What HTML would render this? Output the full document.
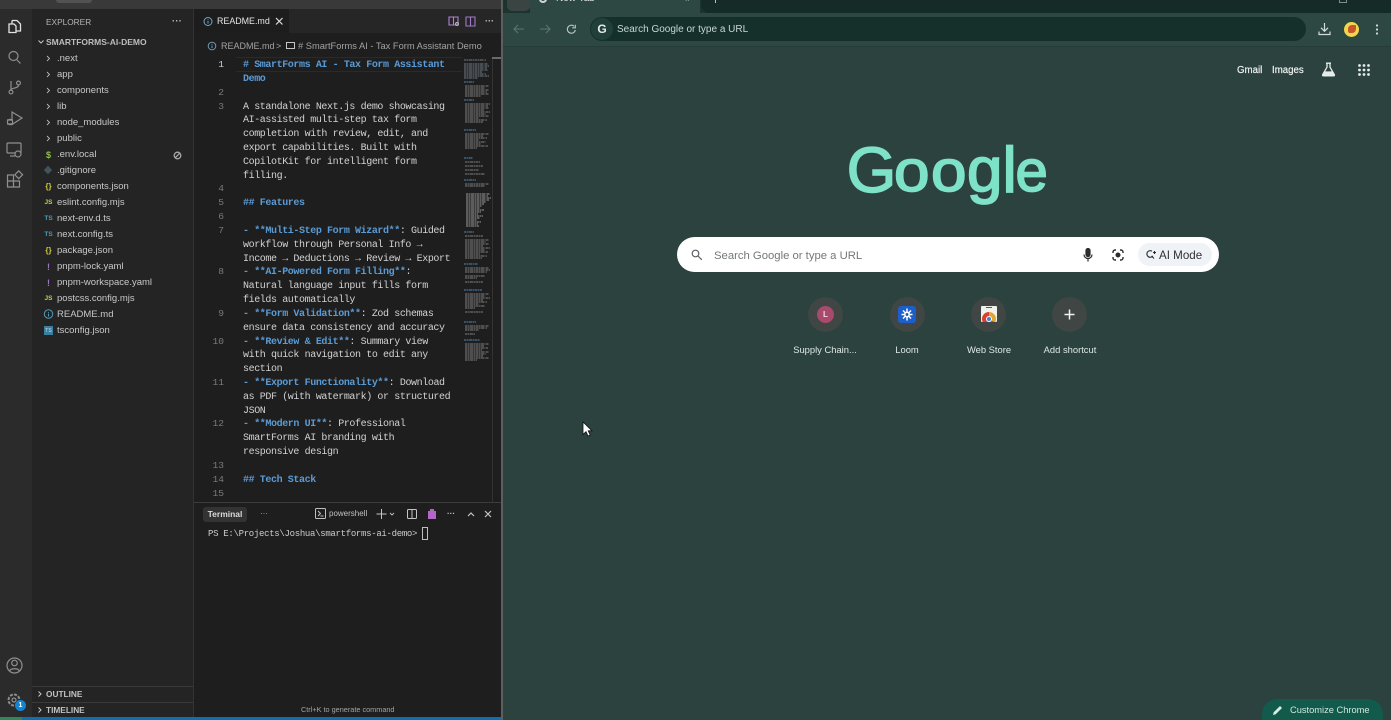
<!DOCTYPE html>
<html><head><meta charset="utf-8"><style>
*{box-sizing:border-box}
html,body{margin:0;padding:0;width:1391px;height:720px;overflow:hidden;background:#2b423e;font-family:"Liberation Sans",sans-serif}
#r{position:absolute;left:0;top:0;width:1391px;height:720px;overflow:hidden}
.a{position:absolute;white-space:nowrap}
svg{position:absolute;overflow:visible}
.f{position:absolute;left:57px;margin-top:1px;font-size:9.5px;line-height:16px;height:16px;color:#c8c8c8;white-space:nowrap}
.i{position:absolute;left:43px;margin-top:1px;width:11px;text-align:center;font-size:8px;line-height:16px;font-weight:bold;white-space:nowrap}
.c{position:absolute;left:243px;margin-top:3px;font-family:"Liberation Mono",monospace;font-size:10px;letter-spacing:-.4px;line-height:14px;height:14px;color:#d2d2d2;white-space:pre}
.c b,.b{color:#5b9bd5;font-weight:bold}
.n{position:absolute;left:195px;margin-top:1px;width:29px;text-align:right;font-family:"Liberation Mono",monospace;font-size:9.6px;line-height:14px;color:#7a7a7a}
.sc{position:absolute;top:297px;width:35px;height:35px;border-radius:50%;background:#3f4644}
.sl{position:absolute;top:343px;width:82px;text-align:center;font-size:9.4px;line-height:13px;color:#dfe8e5;white-space:nowrap}
.g span{position:absolute;line-height:80px;color:#7ee2c9;-webkit-text-stroke:1.7px #7ee2c9;transform-origin:0 0}
</style></head><body><div id="r">

<!-- VS CODE -->
<div class="a" style="left:0;top:0;width:503px;height:720px;background:#1e1e1e;overflow:hidden">
<div class="a" style="left:0;top:0;width:503px;height:9px;background:#393939"></div>
<div class="a" style="left:56px;top:0;width:36px;height:3px;background:#525252;border-radius:0 0 3px 3px"></div>
<div class="a" style="left:0;top:9px;width:32px;height:708px;background:#2b2b2b"></div>
<div class="a" style="left:32px;top:9px;width:162px;height:708px;background:#242424"></div>
<div class="a" style="left:194px;top:9px;width:308px;height:24px;background:#262626"></div>
<div class="a" style="left:194px;top:9px;width:95px;height:24px;background:#1d1d1d"></div>
<div class="a" style="left:193px;top:9px;width:1px;height:708px;background:#333"></div>
</div>

<!-- activity icons -->
<svg style="left:0;top:0" width="32" height="720" fill="none" stroke="#8f8f8f" stroke-width="1.2">
<g stroke="#e2e2e2" stroke-width="1.3"><path d="M12 20.500h5l3.500 3.500v7h-5"/><path d="M9 24h5l2 2v6.500H9z"/><path d="M12 20.500V24"/></g>
<circle cx="13.500" cy="56" r="4.500"/><path d="M17 60l3.500 3.500"/>
<circle cx="11" cy="92" r="1.900"/><circle cx="18.500" cy="83" r="1.900"/><path d="M11 90V81M18.500 85c0 4-7.500 2.500-7.500 5"/>
<path d="M12 112l10 6-10 6.500z"/><circle cx="10" cy="122" r="2.600" fill="#2b2b2b"/><path d="M7 120h6M7 124h6"/>
<rect x="7" y="143" width="14" height="10" rx="1"/><path d="M10 156h5"/><circle cx="18" cy="154" r="3" fill="#2b2b2b"/>
<path d="M7.500 175h6v6h-6zM7.500 181h6v6h-6zM13.500 181h6v6h-6z"/><rect x="16" y="172" width="5.500" height="5.500" transform="rotate(45 18.700 174.700)"/>
<circle cx="14.500" cy="665.500" r="7.500"/><circle cx="14.500" cy="663" r="2.800"/><path d="M9.500 671c1-3 9-3 10 0"/>
<circle cx="14" cy="700" r="5.500" stroke-dasharray="3 1.300" stroke-width="2"/><circle cx="14" cy="700" r="2"/>
</svg>
<div class="a" style="left:15px;top:700px;width:11px;height:11px;border-radius:50%;background:#1384d0;color:#fff;font-size:7px;font-weight:bold;line-height:11px;text-align:center">1</div>

<!-- explorer -->
<div class="a" style="left:46px;top:16px;font-size:8.3px;line-height:12px;color:#b5b5b5">EXPLORER</div>
<div class="a" style="left:172px;top:15px;font-size:9px;line-height:12px;color:#c8c8c8;letter-spacing:.4px;font-weight:bold">···</div>
<svg style="left:37px;top:38px" width="8" height="8" fill="none" stroke="#c5c5c5" stroke-width="1"><path d="M1.500 2.500L4 5l2.500-2.500"/></svg>
<div class="a" style="left:46px;top:36px;font-size:8.5px;line-height:12px;font-weight:bold;color:#bdbdbd">SMARTFORMS-AI-DEMO</div>

<svg style="left:44px;top:50px" width="10" height="100" fill="none" stroke="#b5b5b5" stroke-width=".9"><path d="M3 6l2.500 2.500L3 11M3 22l2.500 2.500L3 27M3 38l2.500 2.500L3 43M3 54l2.500 2.500L3 59M3 70l2.500 2.500L3 75M3 86l2.500 2.500L3 91"/></svg>
<div class="f" style="top:50px">.next</div>
<div class="f" style="top:66px">app</div>
<div class="f" style="top:82px">components</div>
<div class="f" style="top:98px">lib</div>
<div class="f" style="top:114px">node_modules</div>
<div class="f" style="top:130px">public</div>
<div class="f" style="top:146px">.env.local</div>
<div class="f" style="top:162px">.gitignore</div>
<div class="f" style="top:178px">components.json</div>
<div class="f" style="top:194px">eslint.config.mjs</div>
<div class="f" style="top:210px">next-env.d.ts</div>
<div class="f" style="top:226px">next.config.ts</div>
<div class="f" style="top:242px">package.json</div>
<div class="f" style="top:258px">pnpm-lock.yaml</div>
<div class="f" style="top:274px">pnpm-workspace.yaml</div>
<div class="f" style="top:290px">postcss.config.mjs</div>
<div class="f" style="top:306px">README.md</div>
<div class="f" style="top:322px">tsconfig.json</div>

<div class="i" style="top:146px;color:#8dc149;font-size:9px">$</div>
<div class="a" style="left:45px;top:167px;width:6px;height:6px;background:#41535b;transform:rotate(45deg)"></div>
<div class="i" style="top:178px;color:#cbcb41;font-size:8px">{}</div>
<div class="i" style="top:194px;color:#cbcb41;font-size:6.5px">JS</div>
<div class="i" style="top:210px;color:#519aba;font-size:6.5px">TS</div>
<div class="i" style="top:226px;color:#519aba;font-size:6.5px">TS</div>
<div class="i" style="top:242px;color:#cbcb41;font-size:8px">{}</div>
<div class="i" style="top:258px;color:#a074c4;font-size:9px">!</div>
<div class="i" style="top:274px;color:#a074c4;font-size:9px">!</div>
<div class="i" style="top:290px;color:#cbcb41;font-size:6.5px">JS</div>
<svg style="left:43px;top:309px" width="11" height="11" fill="none" stroke="#519aba"><circle cx="5.500" cy="5" r="4.200"/><path d="M5.500 3v.8M5.500 4.600V7.500"/></svg>
<div class="a" style="left:44px;top:326px;width:9px;height:9px;background:#3b7f9e;color:#c7e3ee;font-size:5px;line-height:10px;text-align:center">TS</div>
<svg style="left:173px;top:151px" width="9" height="9" fill="none" stroke="#a9a9a9" stroke-width="1.300"><circle cx="4.500" cy="4.500" r="3.300"/><path d="M2.200 6.800l4.600-4.600"/></svg>

<div class="a" style="left:32px;top:686px;width:161px;height:1px;background:#3a3a3a"></div>
<div class="a" style="left:32px;top:702px;width:161px;height:1px;background:#3a3a3a"></div>
<svg style="left:36px;top:689px" width="8" height="26" fill="none" stroke="#c5c5c5" stroke-width="1"><path d="M2.500 2.500L5 5 2.500 7.500M2.500 18.500L5 21l-2.500 2.500"/></svg>
<div class="a" style="left:46px;top:688px;font-size:8.3px;line-height:12px;font-weight:bold;color:#c0c0c0">OUTLINE</div>
<div class="a" style="left:46px;top:704px;font-size:8.3px;line-height:12px;font-weight:bold;color:#c0c0c0">TIMELINE</div>

<!-- Editor tab -->
<svg style="left:203px;top:16px" width="11" height="11" fill="none" stroke="#6fa8c7"><circle cx="5" cy="5.500" r="4"/><path d="M5 3.500v.7M5 5v2.500"/></svg>
<div class="a" style="left:217px;top:15px;font-size:8.9px;line-height:13px;color:#e4e4e4">README.md</div>
<svg style="left:275px;top:17px" width="9" height="9" stroke="#dcdcdc" stroke-width="1.200"><path d="M1 1l6.500 6.500M7.500 1L1 7.500"/></svg>
<svg style="left:448px;top:15px" width="30" height="12" fill="none" stroke="#b180d7" stroke-width="1.100"><path d="M1 2h9v8H1zM5.500 2v8"/><circle cx="9" cy="9" r="1.400" stroke="#b9b9b9"/><path d="M18 2h9v9h-9zM22.500 2v9" stroke="#a07bc8"/></svg>
<div class="a" style="left:485px;top:15px;font-size:9px;line-height:12px;color:#c8c8c8;font-weight:bold">···</div>
<svg style="left:207px;top:41px" width="10" height="10" fill="none" stroke="#6f9cb5"><circle cx="5" cy="5" r="3.800"/><path d="M5 3v.7M5 4.500V7"/></svg>
<div class="a" style="left:221px;top:40px;font-size:9px;line-height:12px;color:#a3a3a3">README.md</div>
<div class="a" style="left:276px;top:40px;font-size:9px;line-height:12px;color:#a3a3a3">&gt;</div>
<div class="a" style="left:286px;top:42px;width:9px;height:7px;border:1px solid #c5c5c5;background:#1e1e1e"></div>
<div class="a" style="left:298px;top:40px;font-size:9.3px;line-height:12px;color:#a3a3a3"># SmartForms AI - Tax Form Assistant Demo</div>

<!-- Line highlight + minimap bg -->
<div class="a" style="left:236px;top:57px;width:226px;height:1px;background:#2a2a2a"></div>
<div class="a" style="left:236px;top:71px;width:226px;height:1px;background:#2a2a2a"></div>
<div class="a" style="left:492px;top:58px;width:1px;height:444px;background:#333"></div>
<div class="a" style="left:492px;top:57px;width:10px;height:2px;background:#6a6a6a"></div>

<!-- Line numbers -->
<div class="n" style="top:57px;color:#d0d0d0">1</div>
<div class="n" style="top:85px">2</div>
<div class="n" style="top:99px">3</div>
<div class="n" style="top:181px">4</div>
<div class="n" style="top:195px">5</div>
<div class="n" style="top:209px">6</div>
<div class="n" style="top:223px">7</div>
<div class="n" style="top:264px">8</div>
<div class="n" style="top:306px">9</div>
<div class="n" style="top:334px">10</div>
<div class="n" style="top:375px">11</div>
<div class="n" style="top:416px">12</div>
<div class="n" style="top:458px">13</div>
<div class="n" style="top:472px">14</div>
<div class="n" style="top:486px">15</div>

<!-- Code -->
<div class="c b" style="top:56px"># SmartForms AI - Tax Form Assistant</div>
<div class="c b" style="top:70px">Demo</div>
<div class="c" style="top:98px">A standalone Next.js demo showcasing</div>
<div class="c" style="top:111px">AI-assisted multi-step tax form</div>
<div class="c" style="top:125px">completion with review, edit, and</div>
<div class="c" style="top:139px">export capabilities. Built with</div>
<div class="c" style="top:153px">CopilotKit for intelligent form</div>
<div class="c" style="top:167px">filling.</div>
<div class="c b" style="top:194px">## Features</div>
<div class="c" style="top:222px"><b>- **Multi-Step Form Wizard**</b>: Guided</div>
<div class="c" style="top:236px">workflow through Personal Info →</div>
<div class="c" style="top:250px">Income → Deductions → Review → Export</div>
<div class="c" style="top:263px"><b>- **AI-Powered Form Filling**</b>:</div>
<div class="c" style="top:277px">Natural language input fills form</div>
<div class="c" style="top:291px">fields automatically</div>
<div class="c" style="top:305px"><b>- **Form Validation**</b>: Zod schemas</div>
<div class="c" style="top:319px">ensure data consistency and accuracy</div>
<div class="c" style="top:333px"><b>- **Review &amp; Edit**</b>: Summary view</div>
<div class="c" style="top:346px">with quick navigation to edit any</div>
<div class="c" style="top:360px">section</div>
<div class="c" style="top:374px"><b>- **Export Functionality**</b>: Download</div>
<div class="c" style="top:388px">as PDF (with watermark) or structured</div>
<div class="c" style="top:402px">JSON</div>
<div class="c" style="top:415px"><b>- **Modern UI**</b>: Professional</div>
<div class="c" style="top:429px">SmartForms AI branding with</div>
<div class="c" style="top:443px">responsive design</div>
<div class="c b" style="top:471px">## Tech Stack</div>

<!-- Minimap -->
<svg style="left:464px;top:58px" width="26" height="304" fill="none" stroke-width=".9" stroke-dasharray="2.500 .5 1.500 .5 3.500 .5 1 .5">
<path stroke="#6f7a84" d="M0 2h22M0 6h24M0 8h25M0 10h23M0 12h24M0 14h18M0 16h22M0 18h25M0 20h14"/>
<path stroke="#4f86b5" d="M0 24h10M0 42h10M0 72h12M0 100h9M0 122h12M0 174h10M0 206h14M0 232h18M0 264h12M0 282h16"/>
<path stroke="#7d7d7d" d="M1 28h24M1 30h20M1 32h24M1 34h22M1 36h24M1 38h16M1 46h25M1 48h23M1 50h24M1 52h19M1 54h25M1 56h21M1 58h24M1 60h14M1 62h22M1 64h18M1 76h24M1 78h18M1 80h22M1 82h14M1 84h21M1 86h16M1 88h23M1 90h12M1 104h15M1 108h18M1 112h14M1 116h20M1 126h24M1 128h20"/>
<path stroke="#999" d="M2 136h24M2 138h22M2 140h25M2 142h23M2 144h20M2 146h18M2 148h16M2 150h14M2 152h18M2 154h15M2 156h12M2 158h17M2 160h14M2 162h11M2 164h15M2 166h12M2 168h13"/>
<path stroke="#7d7d7d" d="M1 178h18M1 182h24M1 184h21M1 186h24M1 188h18M1 190h25M1 192h20M1 194h23M1 196h15M1 198h22M1 200h17M1 210h24M1 212h25M1 214h22M1 218h20M1 220h12M1 224h18M1 236h24M1 238h20M1 240h25M1 242h18M1 244h22M1 246h14M1 248h20M1 250h10M1 254h18M1 268h24M1 270h22M1 272h14M1 276h10M1 286h24M1 288h19M1 290h23M1 292h17M1 294h24M1 296h21M1 298h18M1 300h24M1 302h12"/>
</svg>

<!-- Terminal -->
<div class="a" style="left:194px;top:502px;width:308px;height:1px;background:#3c3c3c"></div>
<div class="a" style="left:203px;top:507px;width:44px;height:15px;background:#333;border-radius:3px;color:#dadada;font-size:8.5px;line-height:15px;text-align:center;font-weight:bold">Terminal</div>
<div class="a" style="left:260px;top:508px;font-size:8px;line-height:12px;color:#aaa">···</div>
<svg style="left:315px;top:508px" width="12" height="12" fill="none" stroke="#c0c0c0"><rect x=".5" y=".5" width="10" height="10" rx="1"/><path d="M3 3l2.500 2.500L3 8M5.500 8h3"/></svg>
<div class="a" style="left:329px;top:508px;font-size:8px;line-height:12px;color:#c0c0c0">powershell</div>
<svg style="left:376px;top:508px" width="20" height="12" fill="none" stroke="#c5c5c5"><path d="M5.500 1v10M.5 6h10"/><path d="M14 5l2 2 2-2" stroke-width=".9"/></svg>
<svg style="left:407px;top:509px" width="10" height="10" fill="none" stroke="#c5c5c5"><rect x=".5" y=".5" width="9" height="9" rx="1"/><path d="M5 .5v9"/></svg>
<svg style="left:427px;top:508px" width="10" height="12"><path d="M1 3h8v8H1z" fill="#b565c8"/><path d="M3 1h4v2H3z" fill="#b565c8"/></svg>
<div class="a" style="left:447px;top:508px;font-size:8px;line-height:12px;color:#c5c5c5;font-weight:bold">···</div>
<svg style="left:467px;top:510px" width="30" height="9" fill="none" stroke="#c5c5c5" stroke-width="1.200"><path d="M1 6l3-3 3 3"/><path d="M18 1l6 6M24 1l-6 6"/></svg>
<div class="a" style="left:208px;top:527px;font-family:'Liberation Mono',monospace;font-size:9px;letter-spacing:-.3px;line-height:14px;color:#cdcdcd">PS E:\Projects\Joshua\smartforms-ai-demo&gt;</div>
<div class="a" style="left:422px;top:527px;width:6px;height:13px;border:1px solid #bfbfbf"></div>
<div class="a" style="left:301px;top:705px;font-size:7.3px;line-height:10px;color:#a4a4a4">Ctrl+K to generate command</div>

<div class="a" style="left:0;top:717px;width:503px;height:3px;background:#0e6fb0"></div>
<div class="a" style="left:0;top:717px;width:22px;height:3px;background:#2a8a5c"></div>
<div class="a" style="left:501px;top:0;width:2px;height:720px;background:#5c5f5e"></div>

<!-- CHROME -->
<div class="a" style="left:503px;top:0;width:888px;height:13px;background:#1c3430"></div>
<div class="a" style="left:507px;top:0;width:23px;height:11px;background:#3a4442;border-radius:0 0 5px 5px"></div>
<div class="a" style="left:530px;top:0;width:170px;height:13px;background:#2d4843"></div>
<div class="a" style="left:701px;top:0;width:690px;height:13px;background:#142b27;border-radius:0 0 0 9px"></div>
<div class="a" style="left:539px;top:-5px;width:8px;height:8px;border-radius:50%;border:2px solid #cfd8d5"></div>
<div class="a" style="left:556px;top:-7px;font-size:10px;line-height:12px;color:#e4eae8">New Tab</div>
<div class="a" style="left:685px;top:-5px;font-size:8px;color:#9db0ab;line-height:9px">×</div>
<div class="a" style="left:715px;top:0;width:1px;height:3px;background:#b9c5c2"></div>
<div class="a" style="left:1339px;top:0;width:8px;height:3px;border:1px solid #7d8f8b;border-top:0"></div>
<div class="a" style="left:503px;top:13px;width:888px;height:33px;background:#2d4843"></div>
<div class="a" style="left:503px;top:46px;width:888px;height:1px;background:#263c38"></div>

<svg style="left:513px;top:23px" width="70" height="14" fill="none" stroke-width="1.100"><path d="M1 6h10M5 2L1 6l4 4M27 6h10M33 2l4 4-4 4" stroke="#5f736e"/><path d="M61 3.200A4 4 0 1 0 62.300 7" stroke="#bcc9c5"/><path d="M62.300 1.800v3h-3" stroke="#bcc9c5"/></svg>
<div class="a" style="left:590px;top:17px;width:716px;height:24px;border-radius:12px;background:#15302b"></div>
<div class="a" style="left:591px;top:18px;width:22px;height:22px;border-radius:50%;background:#22403a"></div>
<div class="a" style="left:596px;top:21px;width:12px;font-size:12px;line-height:16px;font-weight:bold;color:#e6ecea;text-align:center">G</div>
<div class="a" style="left:617px;top:23px;font-size:10px;line-height:14px;color:#c8d6d2">Search Google or type a URL</div>

<svg style="left:1318px;top:22px" width="13" height="14" fill="none" stroke="#d3dcd9" stroke-width="1.200"><path d="M6.500 1v8M3 5.800L6.500 9.300 10 5.800M1 9.500v3h11v-3"/></svg>
<div class="a" style="left:1344px;top:22px;width:15px;height:15px;border-radius:50%;background:#f1d64f;overflow:hidden"><div class="a" style="left:4px;top:3px;width:8px;height:8px;background:#c9552a;border-radius:4px 1px 4px 2px"></div></div>
<svg style="left:1375px;top:24px" width="4" height="11" fill="#d3dcd9"><circle cx="2" cy="1.500" r="1.100"/><circle cx="2" cy="5.500" r="1.100"/><circle cx="2" cy="9.500" r="1.100"/></svg>

<div class="a" style="left:1237px;top:64px;font-size:9.7px;line-height:13px;color:#eef2f1;-webkit-text-stroke:.2px #eef2f1">Gmail</div>
<div class="a" style="left:1272px;top:64px;font-size:9.7px;line-height:13px;color:#eef2f1;-webkit-text-stroke:.2px #eef2f1">Images</div>
<svg style="left:1321px;top:62px" width="15" height="15" fill="none" stroke="#e6ecea" stroke-width="1.300"><path d="M5 1.200h5M6 1.200v4L1.700 12.500c-.4.8 0 1.300.8 1.300h10c.8 0 1.200-.5.800-1.300L9 5.200v-4"/><path d="M3.500 10h8l1.500 3.500H2z" fill="#e6ecea"/></svg>
<svg style="left:1358px;top:64px" width="12" height="12" fill="#e6ecea"><circle cx="1.500" cy="1.500" r="1.400"/><circle cx="6" cy="1.500" r="1.400"/><circle cx="10.500" cy="1.500" r="1.400"/><circle cx="1.500" cy="6" r="1.400"/><circle cx="6" cy="6" r="1.400"/><circle cx="10.500" cy="6" r="1.400"/><circle cx="1.500" cy="10.500" r="1.400"/><circle cx="6" cy="10.500" r="1.400"/><circle cx="10.500" cy="10.500" r="1.400"/></svg>

<!-- Google logo -->
<div class="a g" style="left:0;top:0"><span style="left:846.600px;top:129.800px;font-size:64px;-webkit-text-stroke-width:1.400px">G</span><span style="left:893.500px;top:131.900px;font-size:58px;transform:scaleX(1.1)">o</span><span style="left:930.500px;top:131.900px;font-size:58px;transform:scaleX(1.1)">o</span><span style="left:966.500px;top:130.500px;font-size:62px;transform:scaleX(1.03)">g</span><span style="left:1002.500px;top:129.800px;font-size:64px">l</span><span style="left:1015.500px;top:131.900px;font-size:58px">e</span></div>

<!-- Search box -->
<div class="a" style="left:677px;top:237px;width:542px;height:35px;border-radius:18px;background:#fff"></div>
<svg style="left:691px;top:249px" width="12" height="12" fill="none" stroke="#5a5f63" stroke-width="1.200"><circle cx="4.500" cy="4.500" r="3.300"/><path d="M7 7l3.800 3.800"/></svg>
<div class="a" style="left:714px;top:249px;font-size:11.3px;line-height:15px;color:#74787a">Search Google or type a URL</div>
<svg style="left:1083px;top:248px" width="10" height="14" fill="none" stroke="#2a2c2e" stroke-width="1.200"><rect x="3" y=".5" width="4" height="8" rx="2" fill="#2a2c2e"/><path d="M1 6.500a4 4 0 0 0 8 0M5 10.500v3"/></svg>
<svg style="left:1112px;top:249px" width="12" height="12" fill="none" stroke="#2a2c2e" stroke-width="1.400"><path d="M4 1H3a2 2 0 0 0-2 2v1M8 1h1a2 2 0 0 1 2 2v1M1 8v1a2 2 0 0 0 2 2h1M11 8v1a2 2 0 0 1-2 2H8"/><circle cx="6" cy="6" r="1.800" fill="#2a2c2e"/></svg>
<div class="a" style="left:1138px;top:243px;width:74px;height:23px;border-radius:12px;background:#eff2f6"></div>
<svg style="left:1146px;top:250px" width="11" height="10" fill="none" stroke="#2a2c2e" stroke-width="1.100"><path d="M6 1.200A3.300 3.300 0 1 0 6.800 6M5.600 6l2.400 2.500"/><path d="M8.500 1v3M7 2.500h3"/></svg>
<div class="a" style="left:1159px;top:248px;font-size:11.6px;line-height:15px;color:#2e3033">AI Mode</div>

<!-- Shortcuts -->
<div class="sc" style="left:808px"></div>
<div class="sc" style="left:890px"></div>
<div class="sc" style="left:971px"></div>
<div class="sc" style="left:1052px"></div>
<div class="a" style="left:817px;top:306px;width:17px;height:17px;border-radius:50%;background:#a84a6c;color:#f0d8e0;font-size:8px;font-weight:bold;line-height:17px;text-align:center">L</div>
<div class="a" style="left:898px;top:306px;width:18px;height:17px;border-radius:3px;background:#1c5fcb"></div>
<svg style="left:901px;top:308px" width="12" height="13" fill="none" stroke="#fff" stroke-width="1.500"><path d="M6 .5v12M.5 6.500h11M2 2.500l8 8M10 2.500l-8 8"/><circle cx="6" cy="6.500" r="2.200" fill="#1c5fcb" stroke="#fff"/></svg>
<div class="a" style="left:981px;top:306px;width:16px;height:16px;background:#f1f1ee;border-radius:1px;overflow:hidden">
<div class="a" style="left:1px;top:6px;width:14px;height:14px;border-radius:50%;background:conic-gradient(#e0a82e 0 33%,#3b9a50 33% 60%,#d8402f 60%)"></div>
<div class="a" style="left:5px;top:10px;width:6px;height:6px;border-radius:50%;background:#3f7fd8;border:1px solid #fff"></div>
<div class="a" style="left:5px;top:1px;width:6px;height:1px;background:#555"></div></div>
<svg style="left:1064px;top:309px" width="11" height="11" stroke="#f2f2f2" stroke-width="1.500"><path d="M5.500 .5v10M.5 5.500h10"/></svg>
<div class="sl" style="left:784px">Supply Chain...</div>
<div class="sl" style="left:866px">Loom</div>
<div class="sl" style="left:948px">Web Store</div>
<div class="sl" style="left:1029px">Add shortcut</div>

<!-- Customize -->
<div class="a" style="left:1262px;top:699px;width:121px;height:21px;border-radius:15px 15px 0 0;background:#125a4b"></div>
<svg style="left:1273px;top:705px" width="10" height="10"><path d="M0 10l.7-2.800L7 1l2 2-6.300 6.300z" fill="#d5ede6"/></svg>
<div class="a" style="left:1290px;top:704px;font-size:9.3px;line-height:13px;color:#cfe8e1">Customize Chrome</div>

<!-- Mouse cursor -->
<svg style="left:582px;top:421px" width="12" height="17"><path d="M1 1v12.500l3-2.800 2 4.300 2.200-1-2-4.200H10z" fill="#fff" stroke="#111" stroke-width=".8"/></svg>
</div></body></html>
